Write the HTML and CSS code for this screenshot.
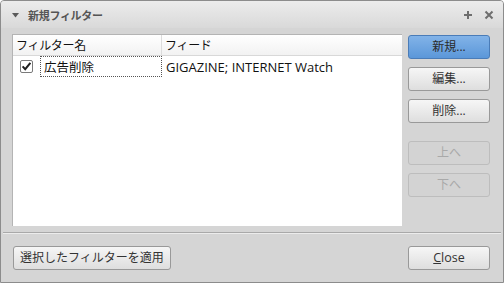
FILE: index.html
```html
<!DOCTYPE html>
<html>
<head>
<meta charset="utf-8">
<link rel="stylesheet" href="styles.css">
</head>
<body>
<div class="window">
  <div class="titlebar">
    <div class="title-left">
      <svg class="tri" width="7" height="5" viewBox="0 0 7 5"><path d="M0 0 L7 0 L3.5 4.5 Z" fill="#5a5a5a"/></svg>
      <span class="title">新規フィルター</span>
    </div>
    <div class="title-right">
      <svg width="10" height="10" viewBox="0 0 10 10"><path d="M5 1 V9 M1 5 H9" stroke="#6e6e6e" stroke-width="2"/></svg>
      <svg width="10" height="10" viewBox="0 0 10 10"><path d="M1.5 1.5 L8.5 8.5 M8.5 1.5 L1.5 8.5" stroke="#6e6e6e" stroke-width="2"/></svg>
    </div>
  </div>
  <div class="main">
    <div class="list">
      <div class="list-head">
        <div class="col c1">フィルター名</div>
        <div class="col c2">フィード</div>
      </div>
      <div class="list-row">
        <div class="cell c1">
          <svg class="check" width="13" height="13" viewBox="0 0 13 13">
            <rect x="0.5" y="0.5" width="12" height="12" rx="1.5" fill="#fff" stroke="#7a7a7a"/>
            <path d="M2.6 6.4 L5.2 9.2 L10.4 2.8" fill="none" stroke="#202020" stroke-width="2"/>
          </svg>
          <span class="focus">広告削除</span>
        </div>
        <div class="cell c2">GIGAZINE; INTERNET Watch</div>
      </div>
    </div>
    <div class="side">
      <button class="btn primary">新規...</button>
      <button class="btn">編集...</button>
      <button class="btn">削除...</button>
      <button class="btn disabled spaced">上へ</button>
      <button class="btn disabled">下へ</button>
    </div>
  </div>
  <div class="sep"></div>
  <div class="bottom">
    <button class="btn wide">選択したフィルターを適用</button>
    <button class="btn latin"><u>C</u>lose</button>
  </div>
</div>
</body>
</html>
```

FILE: styles.css
```css
* { box-sizing: border-box; }
html, body { margin: 0; padding: 0; }
body {
  width: 504px;
  height: 283px;
  background: #ffffff;
  font-family: "Open Sans", "Noto Sans CJK JP", sans-serif;
  font-size: 12px;
  color: #222;
}
.window {
  width: 504px;
  height: 283px;
  border: 1px solid #8c8c8c;
  border-radius: 4px 4px 0 0;
  background: #d5d5d5;
  display: flex;
  flex-direction: column;
  overflow: hidden;
}
.titlebar {
  height: 27px;
  flex: none;
  display: flex;
  align-items: center;
  justify-content: space-between;
  padding: 0 9px 0 11px;
  background: linear-gradient(#ececec, #d9d9d9);
}
.title-left { display: flex; align-items: center; gap: 9px; }
.tri { margin-top: 1px; }
.title {
  font-family: "Noto Sans CJK JP", sans-serif;
  font-size: 11px;
  font-weight: bold;
  color: #555;
  letter-spacing: -0.3px;
}
.title-right { display: flex; align-items: center; gap: 11px; }
.main {
  display: flex;
  padding: 6px 13px 0 11px;
  gap: 6px;
}
.list {
  width: 390px;
  height: 192px;
  background: #fff;
  border: 1px solid #b4b4b4;
  border-bottom: none;
  border-right: none;
}
.list-head {
  display: flex;
  height: 21px;
  background: linear-gradient(#ffffff, #f2f2f2);
  border-bottom: 1px solid #d8d8d8;
}
.col {
  font-family: "Noto Sans CJK JP", sans-serif;
  font-size: 12px;
  line-height: 20px;
  padding-left: 3px;
  color: #111;
  letter-spacing: -0.3px;
}
.c1 { width: 149px; flex: none; }
.c2 { flex: 1; }
.list-head .c1 { border-right: 1px solid #dcdcdc; }
.list-row { display: flex; height: 21px; }
.cell { display: flex; align-items: center; }
.cell.c1 { padding-left: 7px; gap: 7px; }
.cell.c2 { padding-left: 4px; font-size: 13px; color: #111; }
.check { flex: none; }
.focus {
  font-family: "Noto Sans CJK JP", sans-serif;
  font-size: 12.5px;
  height: 21px;
  line-height: 19px;
  width: 123px;
  padding-left: 3px;
  border: 1px dotted #555;
  color: #111;
}
.side {
  display: flex;
  flex-direction: column;
  gap: 8px;
  padding-top: 1px;
}
.btn {
  width: 82px;
  height: 24px;
  border: 1px solid #999;
  border-radius: 3px;
  background: linear-gradient(#f6f6f6, #dedede);
  font-family: "Open Sans", "Noto Sans CJK JP", sans-serif;
  font-size: 12px;
  color: #333;
  padding: 0;
  line-height: 20px;
}
.btn.latin { font-size: 12.5px; }
.btn.primary {
  background: linear-gradient(#82b3e8, #5b97d9);
  border-color: #4a7cb8;
  color: #2a2a2a;
}
.btn.disabled {
  background: #d3d3d3;
  border-color: #bdbdbd;
  color: #a9a9a9;
}
.btn.spaced { margin-top: 10px; }
.sep {
  height: 2px;
  margin: 6px 2px 0 2px;
  border-top: 1px solid #a9a9a9;
  border-bottom: 1px solid #ececec;
}
.bottom {
  display: flex;
  justify-content: space-between;
  padding: 12px 13px 0 12px;
}
.bottom .btn { height: 24px; }
.btn.wide { width: 158px; }
```
